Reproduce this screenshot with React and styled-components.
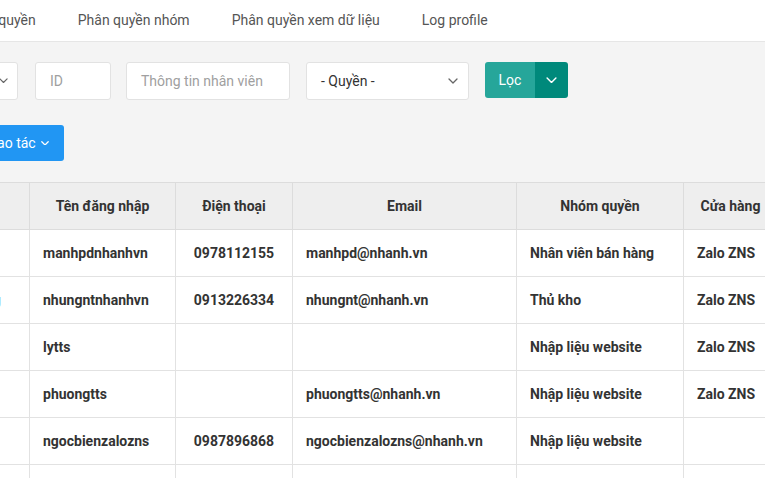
import React from "react";
import styled, { createGlobalStyle } from "styled-components";

const Global = createGlobalStyle`
  html, body { margin: 0; padding: 0; background: #f4f4f4; overflow: hidden; }
  body { font-family: Roboto, "Noto Sans", "Liberation Sans", sans-serif; color: #333; }
  * { box-sizing: border-box; }
`;

const Page = styled.div`
  width: 900px;
  margin-left: -58px;
  min-height: 478px;
`;

const Nav = styled.nav`
  height: 42px;
  background: #fff;
  border-bottom: 1px solid #e6e6e6;
  display: flex;
  align-items: center;
  padding-bottom: 2px;
`;

const Tab = styled.a`
  padding: 0 21px;
  font-size: 14px;
  line-height: 38px;
  color: #555;
  white-space: nowrap;
  text-decoration: none;
`;

const Filters = styled.div`
  display: flex;
  align-items: flex-start;
  padding: 20px 0 0 15px;
`;

const Field = styled.div`
  height: 38px;
  width: ${(p) => p.$w}px;
  margin-right: ${(p) => p.$mr ?? 16}px;
  background: #fff;
  border: 1px solid #e2e2e2;
  border-radius: 3px;
  display: flex;
  align-items: center;
  justify-content: ${(p) => (p.$end ? "flex-end" : "space-between")};
  padding: 0 ${(p) => (p.$pr != null ? p.$pr : 14)}px 0 14px;
  font-size: 14px;
  color: ${(p) => (p.$placeholder ? "#a0a0a0" : "#333")};
  white-space: nowrap;
`;

const SplitButton = styled.div`
  display: flex;
  height: 36px;
  border-radius: 3px;
  overflow: hidden;
`;

const BtnMain = styled.button`
  width: 50px;
  border: 0;
  background: #26a69a;
  color: #fff;
  font-family: inherit;
  font-size: 14px;
  padding: 0;
`;

const BtnCaret = styled.button`
  width: 33px;
  border: 0;
  background: #00897b;
  color: #fff;
  display: flex;
  align-items: center;
  justify-content: center;
  padding: 0;
`;

const ActionRow = styled.div`
  padding: 25px 0 0 15px;
`;

const ActionButton = styled.button`
  height: 36px;
  width: 107px;
  border: 0;
  border-radius: 3px;
  background: #2196f3;
  color: #fff;
  font-family: inherit;
  font-size: 14px;
  display: flex;
  align-items: center;
  gap: 5px;
  padding: 0 0 0 24px;
`;

const Table = styled.table`
  margin: 21px 0 0 15px;
  border-collapse: collapse;
  table-layout: fixed;
  background: #fff;
`;

const Th = styled.th`
  height: 47px;
  background: #eeeeee;
  border: 1px solid #dcdcdc;
  font-size: 14px;
  font-weight: 700;
  color: #333;
  text-align: center;
  padding: 0;
  width: ${(p) => p.$w}px;
  white-space: nowrap;
`;

const Td = styled.td`
  height: 47px;
  border: 1px solid #e2e2e2;
  font-size: 14px;
  font-weight: 700;
  color: #333;
  text-align: ${(p) => (p.$center ? "center" : "left")};
  padding: 0 13px;
  white-space: nowrap;
  overflow: hidden;
`;

const LinkName = styled.span`
  color: #1565c0;
  margin-left: -3px;
`;

const Chevron = ({ size = 10, color = "#666", sw = 1.3 }) => (
  <svg width={size} height={size * 0.6} viewBox="0 0 10 6" fill="none">
    <path d="M1 1l4 4 4-4" stroke={color} strokeWidth={sw} strokeLinecap="round" strokeLinejoin="round" />
  </svg>
);

const cols = [72, 146, 117, 224, 167, 94];
const headers = ["", "Tên đăng nhập", "Điện thoại", "Email", "Nhóm quyền", "Cửa hàng"];

const rows = [
  ["", "manhpdnhanhvn", "0978112155", "manhpd@nhanh.vn", "Nhân viên bán hàng", "Zalo ZNS"],
  ["Dung", "nhungntnhanhvn", "0913226334", "nhungnt@nhanh.vn", "Thủ kho", "Zalo ZNS"],
  ["", "lytts", "", "", "Nhập liệu website", "Zalo ZNS"],
  ["", "phuongtts", "", "phuongtts@nhanh.vn", "Nhập liệu website", "Zalo ZNS"],
  ["", "ngocbienzalozns", "0987896868", "ngocbienzalozns@nhanh.vn", "Nhập liệu website", ""],
  ["", "", "", "", "", ""],
];

export default function App() {
  return (
    <>
      <Global />
      <Page>
        <Nav>
          <Tab>Phân quyền</Tab>
          <Tab>Phân quyền nhóm</Tab>
          <Tab>Phân quyền xem dữ liệu</Tab>
          <Tab>Log profile</Tab>
        </Nav>
        <Filters>
          <Field $w={61} $pr={9} $mr={17} $end>
            <Chevron size={9} />
          </Field>
          <Field $w={76} $mr={15} $placeholder>ID</Field>
          <Field $w={164} $placeholder>Thông tin nhân viên</Field>
          <Field $w={163} $pr={10}>
            <span>- Quyền -</span>
            <Chevron size={10} />
          </Field>
          <SplitButton>
            <BtnMain>Lọc</BtnMain>
            <BtnCaret>
              <Chevron size={11} color="#fff" />
            </BtnCaret>
          </SplitButton>
        </Filters>
        <ActionRow>
          <ActionButton>
            Thao tác <Chevron size={8} color="#fff" sw={1.6} />
          </ActionButton>
        </ActionRow>
        <Table>
          <thead>
            <tr>
              {headers.map((h, i) => (
                <Th key={i} $w={cols[i]}>{h}</Th>
              ))}
            </tr>
          </thead>
          <tbody>
            {rows.map((r, ri) => (
              <tr key={ri}>
                {r.map((c, ci) => (
                  <Td key={ci} $center={ci === 2}>
                    {ci === 0 && c ? <LinkName>{c}</LinkName> : c}
                  </Td>
                ))}
              </tr>
            ))}
          </tbody>
        </Table>
      </Page>
    </>
  );
}
